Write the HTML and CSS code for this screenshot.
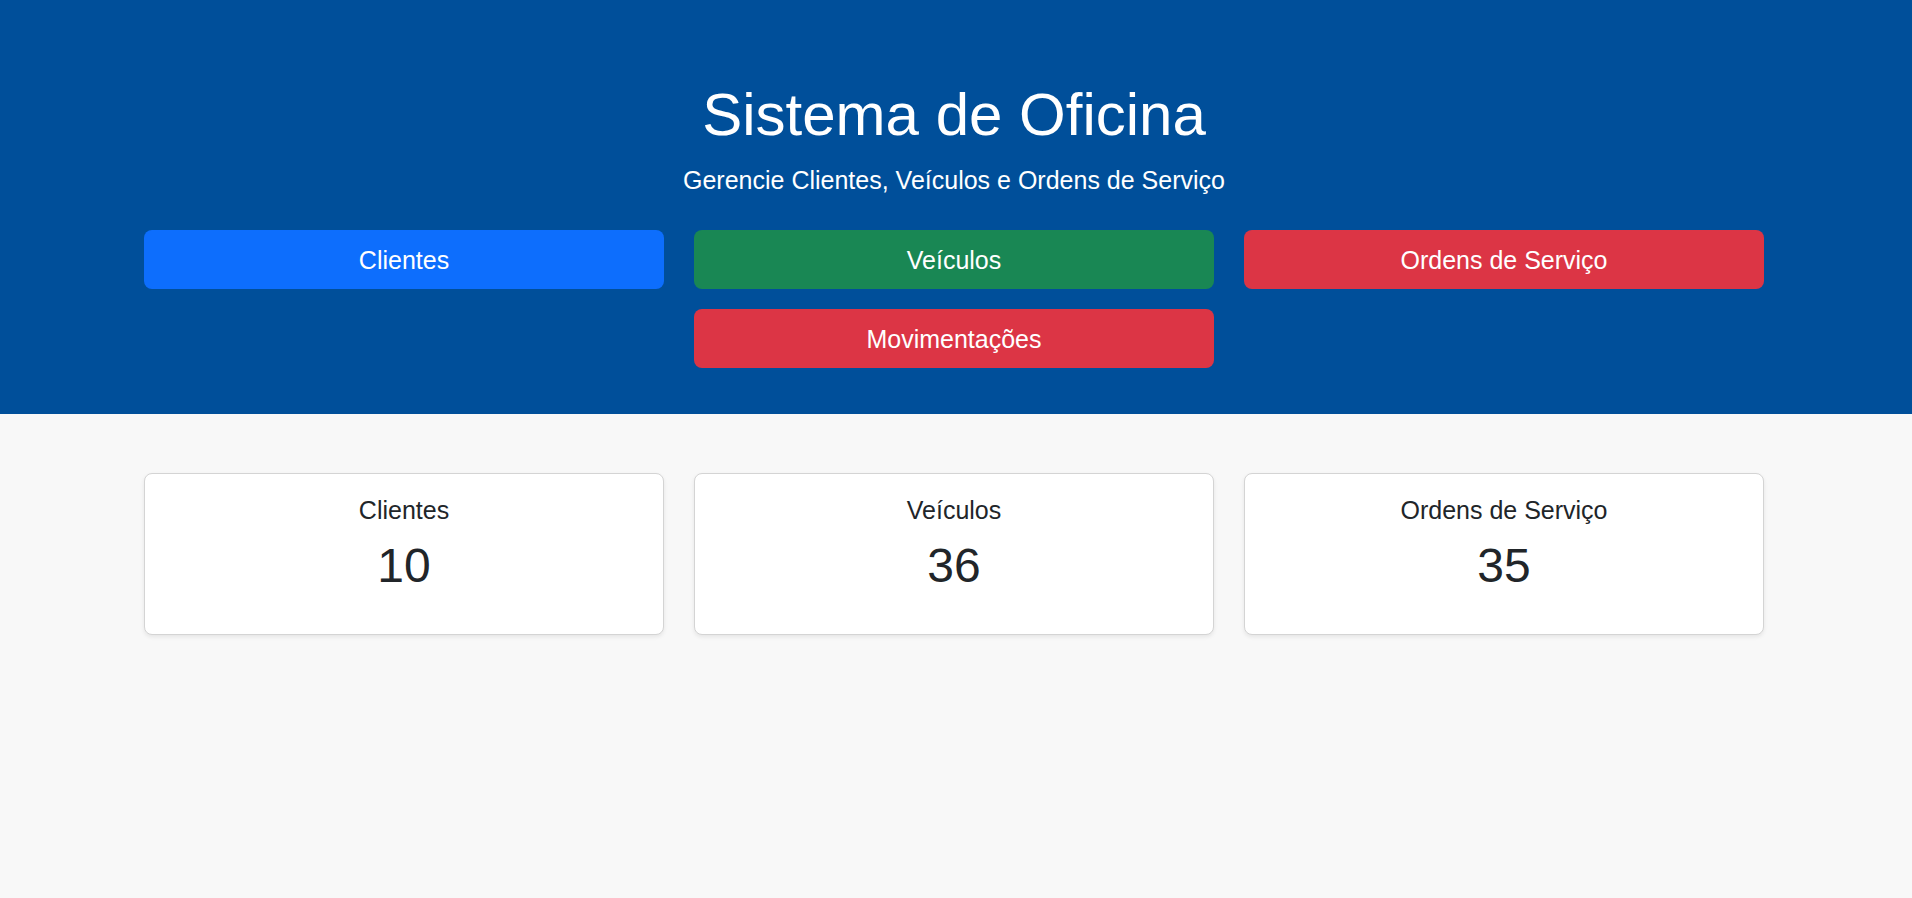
FILE: index.html
```html
<!DOCTYPE html>
<html lang="pt-BR">
<head>
<meta charset="utf-8">
<title>Sistema de Oficina</title>
<link rel="stylesheet" href="styles.css">
</head>
<body>
<header class="hero">
  <h1 class="hero-title">Sistema de Oficina</h1>
  <p class="hero-sub">Gerencie Clientes, Veículos e Ordens de Serviço</p>
  <nav class="nav-grid">
    <a class="btn btn-blue" href="#">Clientes</a>
    <a class="btn btn-green" href="#">Veículos</a>
    <a class="btn btn-red" href="#">Ordens de Serviço</a>
    <a class="btn btn-red btn-center" href="#">Movimentações</a>
  </nav>
</header>
<main class="content">
  <section class="stats">
    <div class="card">
      <div class="card-title">Clientes</div>
      <div class="card-num">10</div>
    </div>
    <div class="card">
      <div class="card-title">Veículos</div>
      <div class="card-num">36</div>
    </div>
    <div class="card">
      <div class="card-title">Ordens de Serviço</div>
      <div class="card-num">35</div>
    </div>
  </section>
</main>
</body>
</html>
```
FILE: styles.css
```css
* { box-sizing: border-box; }
html, body {
  margin: 0;
  padding: 0;
}
body {
  font-family: "Liberation Sans", Arial, sans-serif;
  background: #f8f8f8;
  color: #212529;
  min-height: 898px;
}
.hero {
  background: #004f9a;
  color: #fff;
  text-align: center;
  padding: 79px 148px 46px 144px;
}
.hero-title {
  margin: 0;
  font-size: 60px;
  line-height: 72px;
  font-weight: 400;
}
.hero-sub {
  margin: 11px 0 0;
  font-size: 25px;
  line-height: 36px;
}
.nav-grid {
  margin-top: 32px;
  display: grid;
  grid-template-columns: repeat(3, 1fr);
  column-gap: 30px;
  row-gap: 20px;
}
.btn {
  display: block;
  color: #fff;
  text-decoration: none;
  font-size: 25px;
  line-height: 36px;
  padding: 11.5px 12px;
  border-radius: 8px;
}
.btn-blue { background: #0d6efd; }
.btn-green { background: #198754; }
.btn-red { background: #dc3545; }
.btn-center { grid-column: 2; }
.content {
  padding: 59px 148px 0 144px;
}
.stats {
  display: grid;
  grid-template-columns: repeat(3, 1fr);
  column-gap: 30px;
}
.card {
  background: #fff;
  border: 1px solid #d4d4d4;
  border-radius: 8px;
  box-shadow: 0 2px 4px rgba(0, 0, 0, 0.08);
  text-align: center;
  padding: 18px 12px 36px;
}
.card-title {
  font-size: 25px;
  line-height: 36px;
  margin-bottom: 5px;
}
.card-num {
  font-size: 48px;
  line-height: 65px;
}
```
